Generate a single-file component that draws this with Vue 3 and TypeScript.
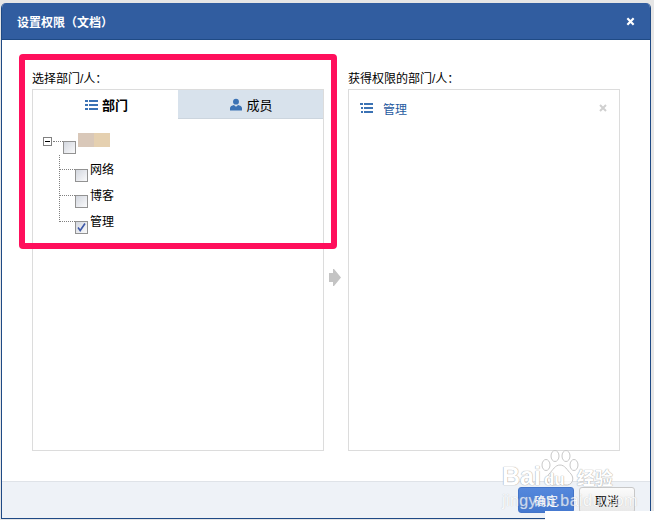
<template>
  <div class="page">
    <div class="dialog">
      <header class="head">
        <span class="title">设置权限（文档）</span>
        <svg class="close" width="9" height="9" viewBox="0 0 10 10">
          <path d="M1.5 1.5l7 7M8.5 1.5l-7 7" stroke="#fff" stroke-width="2.4" />
        </svg>
      </header>

      <div class="body">
        <section class="col left">
          <div class="label">选择部门/人：</div>
          <div class="panel">
            <div class="tabs">
              <div class="tab active">
                <svg class="list-icon" width="13" height="10" viewBox="0 0 13 10">
                  <path d="M0 0h3v2H0zM4 0h9v2H4zM0 4h3v2H0zM4 4h9v2H4zM0 8h3v2H0zM4 8h9v2H4z" fill="#3b72b4" />
                </svg>
                <b>部门</b>
              </div>
              <div class="tab">
                <svg width="12" height="13" viewBox="0 0 13 13">
                  <circle cx="6.5" cy="3.4" r="3.2" fill="#3b72b4" />
                  <path d="M0 13V10.4C0 8.4 2.2 7.4 4.2 7L6.5 9 8.8 7c2 .4 4.2 1.4 4.2 3.4V13z" fill="#3b72b4" />
                </svg>
                <span>成员</span>
              </div>
            </div>

            <div class="tree">
              <div class="root">
                <span class="expander"></span>
                <span class="dots-h"></span>
                <span class="check"></span>
                <span class="blur"><i></i><i></i></span>
              </div>
              <ul class="children">
                <li v-for="item in depts" :key="item.name" class="node">
                  <span class="dots-h short"></span>
                  <span class="check" :class="{ checked: item.checked }">
                    <svg v-if="item.checked" width="11" height="11" viewBox="0 0 11 11">
                      <path d="M2 5.5l2.2 3L9 1.5" fill="none" stroke="#3d58a8" stroke-width="1.6" />
                    </svg>
                  </span>
                  <span class="node-name">{{ item.name }}</span>
                </li>
              </ul>
            </div>
          </div>
        </section>

        <div class="arrow-col">
          <svg width="12" height="17" viewBox="0 0 12 17">
            <path d="M4 0h1l7 8.5L5 17H4v-4H0V4h4z" fill="#c4c4c4" />
          </svg>
        </div>

        <section class="col right">
          <div class="label">获得权限的部门/人：</div>
          <div class="panel">
            <div class="picked">
              <svg width="13" height="10" viewBox="0 0 13 10">
                <path d="M0 0h3v2H0zM4 0h9v2H4zM1 4h2v2H1zM4 4h9v2H4zM1 8h2v2H1zM4 8h9v2H4z" fill="#3b72b4" />
              </svg>
              <span class="picked-name">管理</span>
              <svg class="remove" width="8" height="8" viewBox="0 0 8 8">
                <path d="M1 1l6 6M7 1L1 7" stroke="#d0d0d0" stroke-width="2" />
              </svg>
            </div>
          </div>
        </section>
      </div>

      <footer class="foot">
        <button class="btn primary">确定</button>
        <button class="btn">取消</button>
      </footer>
    </div>

    <div class="highlight"></div>

    <!-- watermark sits over the footer, same as the screenshot -->
    <div class="mark">
      <svg class="paw" width="40" height="40" viewBox="0 0 40 40">
        <g fill="#fff" fill-opacity="0.7" stroke="#c8c8c8" stroke-width="1">
          <ellipse cx="6" cy="15" rx="4" ry="5.5" />
          <ellipse cx="15" cy="6" rx="4" ry="5.5" />
          <ellipse cx="26" cy="6" rx="4" ry="5.5" />
          <ellipse cx="34" cy="15" rx="4" ry="5.5" />
          <path d="M20 15c5 0 7 5 11 9 4 5 1 12-6 11-3-.5-7-.8-10 0-7 1-10-6-6-11 4-4 6-9 11-9z" />
        </g>
      </svg>
      <div class="mark-logo">Bai<span>du</span><em>经验</em></div>
      <div class="mark-url">jingyan.baidu.com</div>
    </div>
    <div class="corner"></div>
  </div>
</template>

<script setup lang="ts">
interface Dept {
  name: string;
  checked: boolean;
}

const depts: Dept[] = [
  { name: '网络', checked: false },
  { name: '博客', checked: false },
  { name: '管理', checked: true },
];
</script>

<style>
html,
body {
  margin: 0;
  background: #fff;
}
</style>

<style scoped>
.page {
  position: relative;
  width: 654px;
  height: 520px;
  overflow: hidden;
  padding: 3px 3px 0 1px;
  box-sizing: border-box;
  background: #e6e6e6;
  font-family: "Liberation Sans", "Noto Sans CJK SC", sans-serif;
  font-size: 12px;
  color: #000;
}

.dialog {
  display: flex;
  flex-direction: column;
  height: 516px;
  box-sizing: border-box;
  border: 1px solid #1f4a85;
  border-top: 0;
  border-radius: 5px 5px 0 0;
  background: #fff;
  overflow: hidden;
}

.head {
  flex: none;
  display: flex;
  align-items: center;
  justify-content: space-between;
  height: 37px;
  padding: 0 15px 0 15px;
  box-sizing: border-box;
  background: #315da0;
  border-bottom: 1px solid #1f4a85;
  color: #fff;
}

.title {
  font-size: 12px;
  font-weight: 700;
}

.body {
  flex: 1;
  display: flex;
  padding: 30px 29px 30px 30px;
  min-height: 0;
}

.col {
  display: flex;
  flex-direction: column;
}

.left {
  width: 292px;
}

.right {
  width: 272px;
}

.arrow-col {
  width: 24px;
  display: flex;
  align-items: center;
  justify-content: center;
  padding: 34px 2px 0 0;
  box-sizing: border-box;
}

.label {
  height: 19px;
  line-height: 18px;
  font-size: 12px;
}

.panel {
  flex: 1;
  border: 1px solid #dcdcdc;
  box-sizing: border-box;
  min-height: 0;
}

.tabs {
  display: flex;
  height: 29px;
}

.tab {
  flex: 1;
  display: flex;
  align-items: center;
  justify-content: center;
  gap: 4px;
  padding-left: 2px;
  font-size: 13px;
  background: #d8e2ec;
  border-bottom: 1px solid #ccd5de;
  box-sizing: border-box;
}

.tab.active {
  background: #fff;
  border-bottom: 0;
}

.tree {
  padding: 18px 0 0 10px;
}

.root {
  position: relative;
  height: 28px;
}

.expander {
  position: absolute;
  left: 0;
  top: 0;
  width: 9px;
  height: 9px;
  box-sizing: border-box;
  border: 1px solid #808080;
  background: linear-gradient(#000, #000) center / 5px 1px no-repeat #fff;
}

.dots-h {
  position: absolute;
  left: 10px;
  top: 4px;
  width: 10px;
  border-top: 1px dotted #808080;
}

.root .check {
  position: absolute;
  left: 20px;
  top: 4px;
}

.blur {
  position: absolute;
  left: 35px;
  top: -4px;
  display: flex;
  width: 32px;
  height: 14px;
}

.blur i {
  flex: 1;
  background: #d9c8b9;
}

.blur i + i {
  background: #e5d0b0;
}

.check {
  display: block;
  flex: none;
  width: 13px;
  height: 13px;
  box-sizing: border-box;
  border: 1px solid #929292;
  background: linear-gradient(135deg, #d3d7df, #fafafb);
}

.check svg {
  display: block;
}

.children {
  position: relative;
  list-style: none;
  margin: 0;
  padding: 0 0 0 32px;
}

.children::before {
  content: "";
  position: absolute;
  left: 16px;
  top: -10px;
  height: 67px;
  border-left: 1px dotted #808080;
}

.node {
  position: relative;
  display: flex;
  align-items: flex-start;
  height: 26px;
  padding-top: 4px;
  box-sizing: border-box;
}

.dots-h.short {
  left: -16px;
  top: 4px;
  width: 16px;
}

.node-name {
  margin-left: 2px;
  margin-top: -8px;
  line-height: 18px;
  font-size: 12px;
}

.picked {
  position: relative;
  display: flex;
  align-items: center;
  padding: 10px 0 0 11px;
  height: 16px;
  color: #1f5aa0;
}

.picked-name {
  margin-left: 10px;
  font-size: 12px;
}

.remove {
  position: absolute;
  right: 12px;
  top: 14px;
}

.foot {
  flex: none;
  display: flex;
  justify-content: flex-end;
  align-items: flex-start;
  gap: 5px;
  height: 37px;
  padding: 5px 15px 0 0;
  box-sizing: border-box;
  background: #eef2f7;
  border-top: 1px solid #dfe3e8;
}

.btn {
  width: 56px;
  height: 26px;
  padding: 0;
  border: 1px solid #c8c8c8;
  border-radius: 3px;
  background: linear-gradient(#fbfbfb, #e8e8e8);
  font: inherit;
  font-size: 12px;
  color: #000;
}

.btn.primary {
  border-color: #4374c8;
  background: linear-gradient(#5487dc, #4579d0);
  color: #fff;
}

.highlight {
  position: absolute;
  left: 19px;
  top: 54px;
  width: 318px;
  height: 195px;
  box-sizing: border-box;
  border: 6px solid #ff0f5c;
  border-radius: 4px;
}

.mark {
  position: absolute;
  left: 502px;
  top: 450px;
  width: 124px;
  height: 62px;
  color: #fff;
  pointer-events: none;
}

.paw {
  position: absolute;
  left: 38px;
  top: 0;
}

.mark-logo {
  position: absolute;
  left: 0;
  top: 13px;
  display: flex;
  align-items: baseline;
  white-space: nowrap;
  font-size: 25px;
  font-weight: 700;
  line-height: 26px;
  text-shadow: 0 0 1px #a8a8a8, 0 0 1px #a8a8a8;
}

.mark-logo span {
  margin-left: 3px;
  font-size: 17px;
}

.mark-logo em {
  margin-left: 12px;
  font-style: normal;
  font-size: 18px;
}

.mark-url {
  position: absolute;
  left: 0;
  top: 42px;
  white-space: nowrap;
  font-size: 16px;
  line-height: 18px;
  letter-spacing: 0.4px;
  opacity: 0.7;
  text-shadow: 0 0 1px #a8a8a8;
}

.corner {
  position: absolute;
  left: 545px;
  top: 511px;
  width: 109px;
  height: 9px;
  background: #fff;
}
</style>
